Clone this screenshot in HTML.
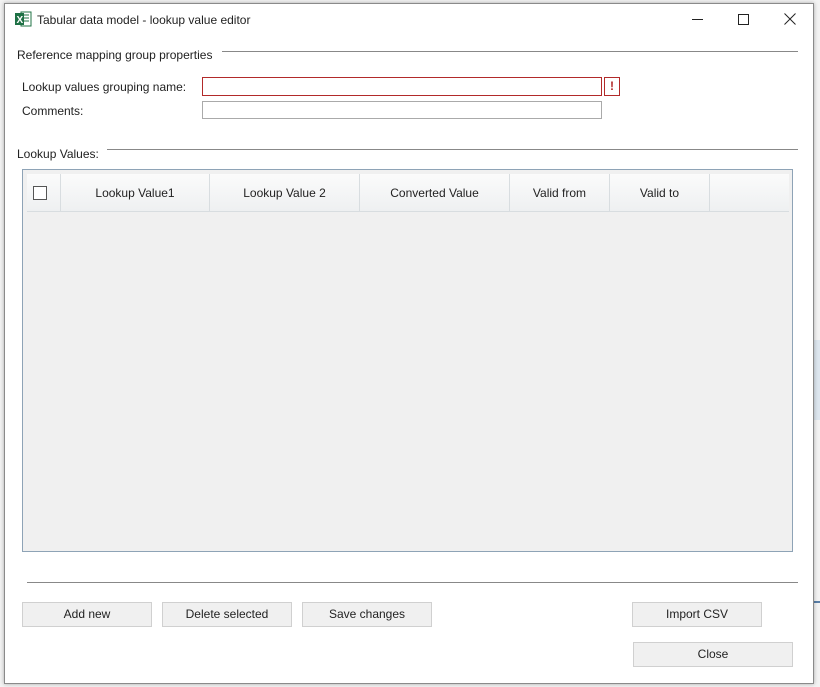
<!DOCTYPE html>
<html><head><style>
*{margin:0;padding:0;box-sizing:border-box}
body{width:820px;height:687px;background:#f3f3f3;font-family:"Liberation Sans",sans-serif;font-size:12px;color:#222;position:relative;overflow:hidden}
.a{position:absolute}
.win{left:4px;top:3px;width:810px;height:681px;background:#fff;border:1px solid #8a8a8a;box-shadow:0 0 4px rgba(0,0,0,.3)}
.line{height:1px;background:#888}
.btn{background:#f0f0f0;border:1px solid #d0d0d0;text-align:center;line-height:23px;font-size:12px}
.hd{top:174px;height:38px;border-right:1px solid #d8dde0;border-bottom:1px solid #d8dde0;text-align:center;line-height:38px;background:linear-gradient(#fbfbfb,#eef0f1)}
</style></head><body>
<div class="a" style="left:814px;top:340px;width:6px;height:80px;background:#dde6ef"></div>
<div class="a" style="left:814px;top:601px;width:6px;height:2px;background:#5a7fa8"></div>
<div class="a win"></div>
<svg class="a" style="left:15px;top:11px" width="17" height="16" viewBox="0 0 17 16"><rect x="6" y="1" width="10" height="14" fill="#fff" stroke="#217346"/><line x1="9" y1="4" x2="14" y2="4" stroke="#217346"/><line x1="9" y1="7" x2="14" y2="7" stroke="#217346"/><line x1="9" y1="10" x2="14" y2="10" stroke="#217346"/><rect x="0" y="2" width="9" height="12" fill="#1e7145"/><text x="1.5" y="12" font-size="10" font-weight="bold" fill="#fff" font-family="Liberation Sans">X</text></svg>
<div class="a" style="left:37px;top:13px;font-size:12px">Tabular data model - lookup value editor</div>
<div class="a" style="left:692px;top:19px;width:11px;height:1px;background:#222"></div>
<div class="a" style="left:738px;top:14px;width:11px;height:11px;border:1px solid #222"></div>
<svg class="a" style="left:784px;top:13px" width="12" height="12"><path d="M0.5 0.5L11.5 11.5M11.5 0.5L0.5 11.5" stroke="#222"/></svg>
<div class="a" style="left:17px;top:48px">Reference mapping group properties</div>
<div class="a line" style="left:222px;top:51px;width:576px"></div>
<div class="a" style="left:22px;top:80px">Lookup values grouping name:</div>
<div class="a" style="left:202px;top:77px;width:400px;height:19px;border:1px solid #b22a2a"></div>
<div class="a" style="left:604px;top:77px;width:16px;height:19px;border:1px solid #b22a2a;color:#b22a2a;font-weight:bold;text-align:center;line-height:17px">!</div>
<div class="a" style="left:22px;top:104px">Comments:</div>
<div class="a" style="left:202px;top:101px;width:400px;height:18px;border:1px solid #aaa"></div>
<div class="a" style="left:17px;top:147px">Lookup Values:</div>
<div class="a line" style="left:107px;top:149px;width:691px"></div>
<div class="a" style="left:22px;top:169px;width:771px;height:383px;border:1px solid #8ea3b6;background:#f0f0f0"></div>
<div class="a hd" style="left:27px;width:762px;border-right:none"></div>
<div class="a hd" style="left:27px;width:34px"></div>
<div class="a" style="left:33px;top:186px;width:14px;height:14px;border:1px solid #555;background:#fff"></div>
<div class="a hd" style="left:61px;width:149px">Lookup Value1</div>
<div class="a hd" style="left:210px;width:150px">Lookup Value 2</div>
<div class="a hd" style="left:360px;width:150px">Converted Value</div>
<div class="a hd" style="left:510px;width:100px">Valid from</div>
<div class="a hd" style="left:610px;width:100px">Valid to</div>
<div class="a line" style="left:27px;top:582px;width:771px"></div>
<div class="a btn" style="left:22px;top:602px;width:130px;height:25px">Add new</div>
<div class="a btn" style="left:162px;top:602px;width:130px;height:25px">Delete selected</div>
<div class="a btn" style="left:302px;top:602px;width:130px;height:25px">Save changes</div>
<div class="a btn" style="left:632px;top:602px;width:130px;height:25px">Import CSV</div>
<div class="a btn" style="left:633px;top:642px;width:160px;height:25px">Close</div>
</body></html>
